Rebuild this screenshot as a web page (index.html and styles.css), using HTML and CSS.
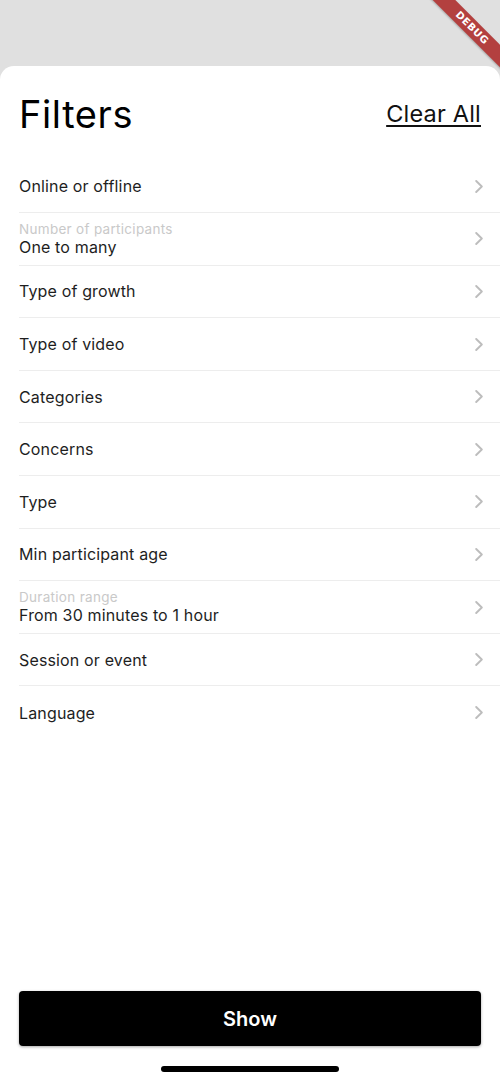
FILE: index.html
```html
<!DOCTYPE html>
<html lang="en">
<head>
<meta charset="utf-8">
<title>Filters</title>
<link rel="stylesheet" href="styles.css">
</head>
<body>
<div class="screen">
  <div class="sheet">
    <div class="header">
      <h1 class="title">Filters</h1>
      <a class="clear" href="#">Clear All</a>
    </div>
    <ul class="list">
      <li class="row"><div class="texts"><span class="value">Online or offline</span></div><svg class="chev" viewBox="0 0 8 13"><polyline points="1.2,1 6.8,6.5 1.2,12"/></svg></li>
      <li class="row"><div class="texts"><span class="label">Number of participants</span><span class="value">One to many</span></div><svg class="chev" viewBox="0 0 8 13"><polyline points="1.2,1 6.8,6.5 1.2,12"/></svg></li>
      <li class="row"><div class="texts"><span class="value">Type of growth</span></div><svg class="chev" viewBox="0 0 8 13"><polyline points="1.2,1 6.8,6.5 1.2,12"/></svg></li>
      <li class="row"><div class="texts"><span class="value">Type of video</span></div><svg class="chev" viewBox="0 0 8 13"><polyline points="1.2,1 6.8,6.5 1.2,12"/></svg></li>
      <li class="row"><div class="texts"><span class="value">Categories</span></div><svg class="chev" viewBox="0 0 8 13"><polyline points="1.2,1 6.8,6.5 1.2,12"/></svg></li>
      <li class="row"><div class="texts"><span class="value">Concerns</span></div><svg class="chev" viewBox="0 0 8 13"><polyline points="1.2,1 6.8,6.5 1.2,12"/></svg></li>
      <li class="row"><div class="texts"><span class="value">Type</span></div><svg class="chev" viewBox="0 0 8 13"><polyline points="1.2,1 6.8,6.5 1.2,12"/></svg></li>
      <li class="row"><div class="texts"><span class="value">Min participant age</span></div><svg class="chev" viewBox="0 0 8 13"><polyline points="1.2,1 6.8,6.5 1.2,12"/></svg></li>
      <li class="row"><div class="texts"><span class="label">Duration range</span><span class="value">From 30 minutes to 1 hour</span></div><svg class="chev" viewBox="0 0 8 13"><polyline points="1.2,1 6.8,6.5 1.2,12"/></svg></li>
      <li class="row"><div class="texts"><span class="value">Session or event</span></div><svg class="chev" viewBox="0 0 8 13"><polyline points="1.2,1 6.8,6.5 1.2,12"/></svg></li>
      <li class="row"><div class="texts"><span class="value">Language</span></div><svg class="chev" viewBox="0 0 8 13"><polyline points="1.2,1 6.8,6.5 1.2,12"/></svg></li>
    </ul>
    <div class="spacer"></div>
    <button class="show" type="button">Show</button>
    <div class="home"></div>
  </div>
  <div class="debug"><span>DEBUG</span></div>
</div>
</body>
</html>
```
FILE: styles.css
```css
* { box-sizing: border-box; }
html, body {
  margin: 0;
  padding: 0;
  height: 1082px;
  background: #e0e0e0;
  font-family: Inter, "Noto Sans", "Liberation Sans", sans-serif;
  overflow: hidden;
}
.screen {
  position: relative;
  height: 1082px;
  padding-top: 66px;
}
.sheet {
  height: 1016px;
  background: #ffffff;
  border-radius: 14px 14px 0 0;
  display: flex;
  flex-direction: column;
}
.header {
  display: flex;
  justify-content: space-between;
  align-items: flex-start;
  padding: 25px 19px 0 19px;
  height: 94.5px;
}
.title {
  margin: 0;
  font-size: 38px;
  font-weight: 400;
  line-height: 46px;
  color: #000;
  letter-spacing: 0.6px;
}
.clear {
  margin-top: 8px;
  font-size: 23.5px;
  line-height: 30px;
  color: #111;
  letter-spacing: 0.2px;
  text-decoration: underline;
  text-decoration-thickness: 1.5px;
  text-underline-offset: 3px;
}
.list {
  list-style: none;
  margin: 0;
  padding: 0 0 0 19px;
}
.row {
  height: 52.6px;
  display: flex;
  align-items: center;
  border-bottom: 1px solid #ededed;
  padding-right: 17px;
}
.row:last-child { border-bottom: none; }
.texts {
  flex: 1;
  display: flex;
  flex-direction: column;
}
.label {
  font-size: 13.5px;
  line-height: 16px;
  color: #c9c9c9;
  letter-spacing: 0.3px;
}
.value {
  font-size: 16px;
  line-height: 20px;
  color: #1e1e1e;
  letter-spacing: 0.15px;
}
.chev {
  width: 8px;
  height: 13px;
  fill: none;
  stroke: #bdbdbd;
  stroke-width: 1.9;
  stroke-linecap: round;
  stroke-linejoin: round;
}
.spacer { flex: 1; }
.show {
  margin: 0 19px;
  height: 55px;
  border: none;
  border-radius: 4px;
  background: #000;
  color: #fff;
  font-family: Inter, "Noto Sans", "Liberation Sans", sans-serif;
  font-size: 20px;
  font-weight: 600;
  box-shadow: 0 1px 3px rgba(0,0,0,0.35);
}
.home {
  align-self: center;
  width: 178px;
  height: 6px;
  border-radius: 3px;
  background: #000;
  margin: 20px 0 10px 0;
}
.debug {
  position: absolute;
  top: 0;
  right: 0;
  width: 80px;
  height: 80px;
  overflow: hidden;
}
.debug span {
  position: absolute;
  top: 20px;
  left: -8px;
  width: 120px;
  height: 16px;
  line-height: 16px;
  transform: rotate(45deg);
  background: #b3403f;
  color: #fff;
  font-family: "DejaVu Sans", sans-serif;
  font-weight: 700;
  font-size: 10px;
  text-align: center;
  letter-spacing: 0.6px;
  box-shadow: 0 1px 2px rgba(0,0,0,0.25);
}
```
